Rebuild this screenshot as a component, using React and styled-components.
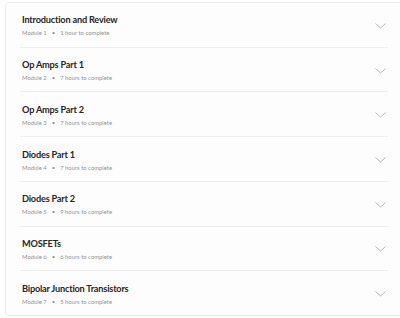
import React from "react"
import styled, { createGlobalStyle } from "styled-components"

const GlobalStyle = createGlobalStyle`
  body {
    margin: 0;
    background: #ffffff;
    overflow: hidden;
    font-family: Lato, "Liberation Sans", sans-serif;
  }
`

const Card = styled.div`
  margin: 2px 0 0 5px;
  width: 400px;
  height: 314px;
  box-sizing: border-box;
  border: 1px solid #ececec;
  border-radius: 4px;
  background: #fdfdfd;
  display: flex;
  flex-direction: column;
`

const Row = styled.div`
  margin-left: 14px;
  width: 368px;
  height: 44px;
  border-bottom: ${props => props.last ? "none" : "1px solid #eeeeee"};
  display: flex;
  align-items: center;
  justify-content: space-between;
`

const Info = styled.div`
  padding: 2px 0 0 2px;
  display: flex;
  flex-direction: column;
  gap: 3px;
`

const Title = styled.div`
  font-size: 9.2px;
  font-weight: 700;
  letter-spacing: -0.2px;
  color: #262626;
  line-height: 12px;
`

const Meta = styled.div`
  font-size: 5.9px;
  color: #949494;
  line-height: 8px;
  display: flex;
  gap: 5px;
`

const Chevron = styled.svg`
  margin: 2px 2px 0 0;
  flex: none;
`

const modules = [
  ["Introduction and Review", "1 hour to complete"],
  ["Op Amps Part 1", "7 hours to complete"],
  ["Op Amps Part 2", "7 hours to complete"],
  ["Diodes Part 1", "7 hours to complete"],
  ["Diodes Part 2", "9 hours to complete"],
  ["MOSFETs", "6 hours to complete"],
  ["Bipolar Junction Transistors", "5 hours to complete"],
]

export default function App() {
  return (
    <>
      <GlobalStyle />
      <Card>
        {modules.map(([title, time], i) => (
          <Row key={title} last={i === modules.length - 1}>
            <Info>
              <Title>{title}</Title>
              <Meta>
                <span>Module {i + 1}</span>
                <span>•</span>
                <span>{time}</span>
              </Meta>
            </Info>
            <Chevron width="11" height="6" viewBox="0 0 11 6">
              <path d="M0.5 0.5 L5.5 5 L10.5 0.5" fill="none" stroke="#b3bbbf" strokeWidth="1" />
            </Chevron>
          </Row>
        ))}
      </Card>
    </>
  )
}
